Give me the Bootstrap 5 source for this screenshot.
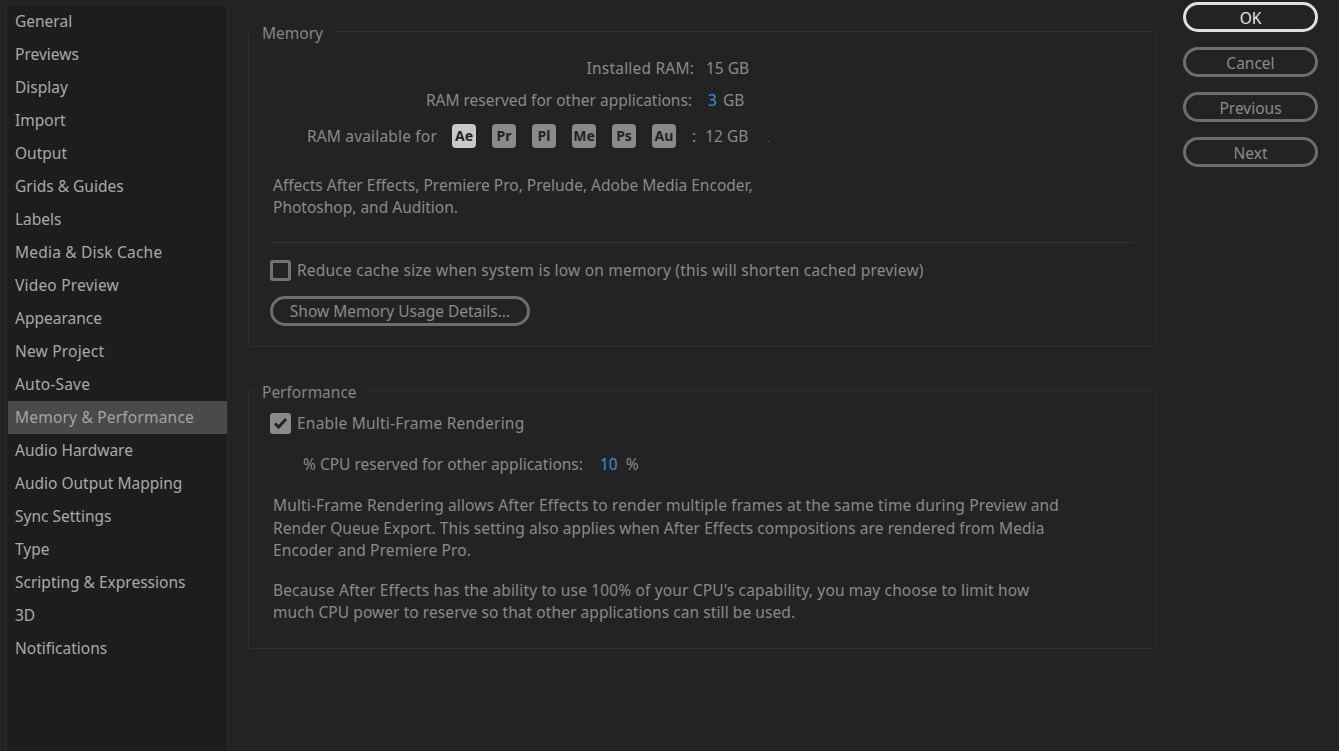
<!DOCTYPE html>
<html>
<head>
    <title>Preferences</title>
    <link href="https://cdn.jsdelivr.net/npm/bootstrap@5.3.0/dist/css/bootstrap.min.css" rel="stylesheet">
    <style>
        html, body { height: 100%; }
        body { background: #232323; color: #8a8a8a; font-family: "Noto Sans", "Open Sans", sans-serif; font-size: 15.5px; line-height: 22px; overflow: hidden; }
        .pref-page { height: 751px; }
        .pref-side { width: 222px; margin: 4px 0 0 6px; background: #1d1d1d; border: 1px solid #2a2a2a; border-bottom: 0; border-radius: 2px 2px 0 0; flex-shrink: 0; }
        .pref-side a { display: block; height: 33px; line-height: 32px; padding-left: 7px; margin-left: 1px; color: #a9a9a9; text-decoration: none; }
        .pref-side a.nav-wide { letter-spacing: .2px; }
        .pref-side a.active { background: #4a4a4a; color: #a4a4a4; }
        .pref-main { width: 908px; margin-left: 20px; flex-shrink: 0; }
        .pref-group { border: 1px solid #2f2f2f; border-radius: 3px; padding: 0; margin: 0; }
        .pref-group legend { float: none; width: auto; font-size: 15.5px; line-height: 22px; margin: 0 0 0 5px; padding: 4px 10px 0 8px; color: #858585; }
        .group-body { padding: 0 20px; }
        .group-memory { margin-top: 18px; height: 329px; }
        .group-perf { margin-top: 30px; height: 272px; }
        .ram-row { height: 22px; }
        .ram-label { width: 425px; text-align: right; flex-shrink: 0; }
        .ram-label.installed { letter-spacing: .2px; }
        .ram-label.reserved { padding-right: 2px; }
        .ram-label.available { width: 168px; letter-spacing: .18px; }
        .ram-value { margin-left: 12px; }
        .ram-value.entered { margin-left: 14px; }
        .unit-text { margin-left: 6px; }
        .chip-row { margin-left: 15px; }
        .row-one { margin-top: 13px; }
        .row-two { margin-top: 10px; }
        .row-three { margin-top: 14px; }
        .blue-num { color: #3d8fdc; }
        .app-chip { width: 24px; height: 24px; border-radius: 4px; background: #8a8a8a; color: #232323; font-weight: 700; font-size: 14px; line-height: 24px; text-align: center; margin-right: 16px; }
        .app-chip.on { background: #c9c9c9; }
        .avail-total { margin-left: 9px; }
        .stray-dot { width: 1px; height: 1px; background: #2f6f9f; margin: 10px 0 0 20px; }
        .note-text { margin: 0 0 0 4px; line-height: 22.5px; letter-spacing: .13px; }
        .note-memory { margin-top: 27px; line-height: 22px; letter-spacing: 0; }
        .note-multi { margin-top: 19px; }
        .note-cpu { margin-top: 17px; letter-spacing: .15px; }
        .line-tight { letter-spacing: .07px; }
        .pref-rule { border-top: 1px solid #333; margin: 24px 0 0 0; width: 865px; opacity: 1; }
        .chk-box { width: 21px; height: 21px; border: 3px solid #727272; border-radius: 3px; flex-shrink: 0; margin-left: 1px; margin-right: 6px; }
        .chk-box.on { background: #8a8a8a; border-color: #8a8a8a; }
        .chk-text { letter-spacing: .22px; }
        .chk-row-perf { margin-top: 9px; }
        .cpu-row { margin-top: 19px; margin-left: 34px; }
        .cpu-num { margin-left: 17px; }
        .pref-btn { border: 3px solid #6e6e6e; color: #8a8a8a; background: transparent; font-size: 15.5px; line-height: 22px; height: 30px; padding: 1px 0 0; border-radius: 15px; }
        .pref-btn.primary { border-color: #e0e0e0; color: #e6e6e6; }
        .pref-actions { width: 135px; margin: 2px 0 0 27px; gap: 15px; flex-shrink: 0; }
        .usage-btn { width: 260px; margin-left: 1px; margin-top: 15px; padding: 0; }
    </style>
</head>
<body>
    <div class="pref-page d-flex">
        <nav class="pref-side">
            <a href="#">General</a>
            <a href="#">Previews</a>
            <a href="#">Display</a>
            <a href="#">Import</a>
            <a href="#">Output</a>
            <a href="#">Grids &amp; Guides</a>
            <a href="#">Labels</a>
            <a href="#" class="nav-wide">Media &amp; Disk Cache</a>
            <a href="#" class="nav-wide">Video Preview</a>
            <a href="#">Appearance</a>
            <a href="#" class="nav-wide">New Project</a>
            <a href="#" class="nav-wide">Auto-Save</a>
            <a href="#" class="nav-wide active">Memory &amp; Performance</a>
            <a href="#">Audio Hardware</a>
            <a href="#">Audio Output Mapping</a>
            <a href="#">Sync Settings</a>
            <a href="#">Type</a>
            <a href="#">Scripting &amp; Expressions</a>
            <a href="#">3D</a>
            <a href="#">Notifications</a>
        </nav>

        <div class="pref-main">
            <fieldset class="pref-group group-memory">
                <legend>Memory</legend>
                <div class="group-body">
                    <div class="ram-row row-one d-flex">
                        <div class="ram-label installed">Installed RAM:</div>
                        <div class="ram-value">15 GB</div>
                    </div>
                    <div class="ram-row row-two d-flex">
                        <div class="ram-label reserved">RAM reserved for other applications:</div>
                        <div class="ram-value entered"><span class="blue-num">3</span><span class="unit-text">GB</span></div>
                    </div>
                    <div class="ram-row row-three d-flex align-items-center">
                        <div class="ram-label available">RAM available for</div>
                        <div class="chip-row d-flex align-items-center">
                            <span class="app-chip on">Ae</span>
                            <span class="app-chip">Pr</span>
                            <span class="app-chip">Pl</span>
                            <span class="app-chip">Me</span>
                            <span class="app-chip">Ps</span>
                            <span class="app-chip">Au</span>
                            <span>:</span>
                            <span class="avail-total">12 GB</span>
                            <span class="stray-dot"></span>
                        </div>
                    </div>
                    <p class="note-text note-memory">Affects After Effects, Premiere Pro, Prelude, Adobe Media Encoder,<br>Photoshop, and Audition.</p>
                    <hr class="pref-rule">
                    <div class="d-flex align-items-center mt-3">
                        <span class="chk-box"></span>
                        <span class="chk-text">Reduce cache size when system is low on memory (this will shorten cached preview)</span>
                    </div>
                    <button type="button" class="btn pref-btn usage-btn d-block">Show Memory Usage Details...</button>
                </div>
            </fieldset>

            <fieldset class="pref-group group-perf">
                <legend>Performance</legend>
                <div class="group-body">
                    <div class="chk-row-perf d-flex align-items-center">
                        <span class="chk-box on d-flex align-items-center justify-content-center">
                            <svg width="15" height="13" viewBox="0 0 15 13"><path d="M2 6.5l3.6 3.6L13 2" fill="none" stroke="#232323" stroke-width="3"/></svg>
                        </span>
                        <span class="chk-text">Enable Multi-Frame Rendering</span>
                    </div>
                    <div class="cpu-row d-flex">
                        <span>% CPU reserved for other applications:</span>
                        <span class="blue-num cpu-num">10</span>
                        <span class="ms-2">%</span>
                    </div>
                    <p class="note-text note-multi">Multi-Frame Rendering allows After Effects to render multiple frames at the same time during Preview and<br><span class="line-tight">Render Queue Export. This setting also applies when After Effects compositions are rendered from Media</span><br>Encoder and Premiere Pro.</p>
                    <p class="note-text note-cpu">Because After Effects has the ability to use 100% of your CPU's capability, you may choose to limit how<br><span class="line-tight">much CPU power to reserve so that other applications can still be used.</span></p>
                </div>
            </fieldset>
        </div>

        <div class="pref-actions d-flex flex-column">
            <button type="button" class="btn pref-btn primary">OK</button>
            <button type="button" class="btn pref-btn">Cancel</button>
            <button type="button" class="btn pref-btn">Previous</button>
            <button type="button" class="btn pref-btn">Next</button>
        </div>
    </div>
    <script src="https://cdn.jsdelivr.net/npm/bootstrap@5.3.0/dist/js/bootstrap.bundle.min.js"></script>
</body>
</html>
